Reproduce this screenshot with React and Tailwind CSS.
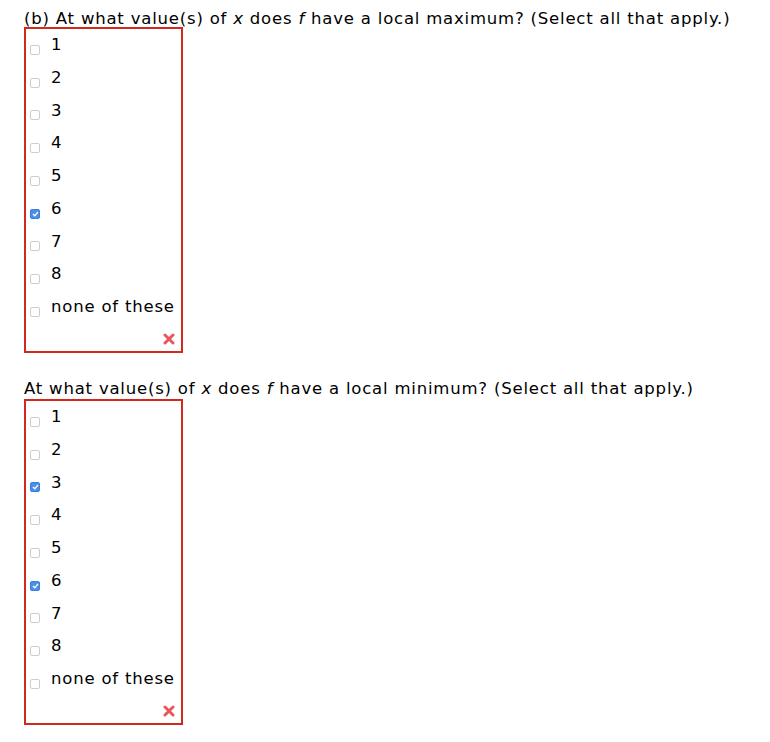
import { Fragment } from "react";

const OPTIONS = ["1", "2", "3", "4", "5", "6", "7", "8", "none of these"];

const Checkbox = ({ checked }) =>
    checked ? (
        <span className="block w-[10px] h-[10px] rounded-[2px] bg-[#4a90e8] border border-[#3f7fd6] flex items-center justify-center">
            <svg width="7" height="6" viewBox="0 0 7 6">
                <path d="M1 3 L2.8 4.8 L6 1" fill="none" stroke="#fff" strokeWidth="1.3" />
            </svg>
        </span>
    ) : (
        <span className="block w-[10px] h-[10px] rounded-[2px] bg-white border border-[#cdcdcd]" />
    );

const Question = ({ title, checked, gap }) => (
    <div>
        <p className={`leading-[17px] ${gap ? "mb-[2px]" : ""}`}>{title}</p>

        <div className="w-[159px] h-[326px] border-2 border-[#d2291f] flex flex-col">
            {OPTIONS.map(opt => (
                <div key={opt} className="h-[32.75px] flex items-center">
                    <span className="block ml-[4px] mt-[9px]">
                        <Checkbox checked={checked.includes(opt)} />
                    </span>
                    <span className="ml-[11px]">{opt}</span>
                </div>
            ))}

            <div className="flex-1 flex justify-end items-start pt-[9px] pr-[6px]">
                <svg width="12" height="12" viewBox="0 0 12 12">
                    <path d="M2 2 L10 10 M10 2 L2 10" stroke="#e8585a" strokeWidth="3" strokeLinecap="round" />
                </svg>
            </div>
        </div>
    </div>
);

export default function App() {
    return (
        <div
            className="bg-white min-h-screen pl-[24px] pt-[10px] text-[16.5px] tracking-[0.8px] text-black"
            style={{ fontFamily: '"DejaVu Sans", Verdana, sans-serif' }}
        >
            <Question
                title={
                    <Fragment>
                        (b) At what value(s) of <i>x</i> does <i>f</i> have a local maximum? (Select all that apply.)
                    </Fragment>
                }
                checked={["6"]}
            />

            <div className="mt-[27px]">
                <Question
                    title={
                        <Fragment>
                            At what value(s) of <i>x</i> does <i>f</i> have a local minimum? (Select all that apply.)
                        </Fragment>
                    }
                    checked={["3", "6"]}
                    gap
                />
            </div>
        </div>
    );
}
